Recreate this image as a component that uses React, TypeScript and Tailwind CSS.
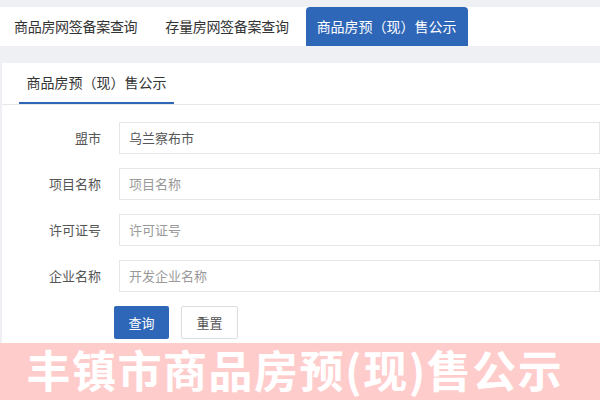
import React from "react";

const tabs = ["商品房网签备案查询", "存量房网签备案查询", "商品房预（现）售公示"];

const fields = [
  { label: "盟市", value: "乌兰察布市", placeholder: "" },
  { label: "项目名称", value: "", placeholder: "项目名称" },
  { label: "许可证号", value: "", placeholder: "许可证号" },
  { label: "企业名称", value: "", placeholder: "开发企业名称" },
];

export default function App() {
  return (
    <div
      className="relative w-[600px] h-[400px] overflow-hidden bg-[#eef0f4]"
      style={{ fontFamily: '"Noto Sans CJK SC", "Noto Sans", sans-serif' }}
    >
      <div className="pt-[7px]">
        <div className="flex h-[39px] bg-white">
          {tabs.map((t, i) =>
            i === 2 ? (
              <div
                key={t}
                className="ml-[17px] flex w-[162px] items-center justify-center rounded-t-[4px] bg-[#2f67b8] text-[14px] text-white"
              >
                {t}
              </div>
            ) : (
              <div
                key={t}
                className={`flex items-center text-[14px] tracking-[-0.3px] text-[#333] ${i === 0 ? "pl-[14px]" : "pl-[28px]"}`}
              >
                {t}
              </div>
            )
          )}
        </div>
      </div>

      <div className="mt-[17px] ml-[2px] h-[400px] bg-white">
        <div className="flex h-[42px] border-b border-[#e8e8e8] pl-[17px]">
          <div className="flex w-[155px] items-center justify-center border-b-2 border-[#2f67b8] text-[14px] text-[#333]">
            商品房预（现）售公示
          </div>
        </div>

        <div className="flex flex-col gap-[14px] pt-[17px]">
          {fields.map((f) => (
            <div key={f.label} className="flex items-center">
              <div className="w-[99px] text-right text-[13px] text-[#555]">{f.label}</div>
              <div className="ml-[18px] flex h-[32px] flex-1 items-center border border-[#e6e6e6] pl-[9px] text-[13px]">
                {f.value ? (
                  <span className="text-[#555]">{f.value}</span>
                ) : (
                  <span className="text-[#999]">{f.placeholder}</span>
                )}
              </div>
            </div>
          ))}
          <div className="flex gap-[12px] pl-[112px]">
            <div className="flex h-[33px] w-[55px] items-center justify-center rounded-[2px] bg-[#2f67b8] text-[13px] text-white">
              查询
            </div>
            <div className="flex h-[33px] w-[57px] items-center justify-center rounded-[2px] border border-[#ddd] bg-white text-[13px] text-[#555]">
              重置
            </div>
          </div>
        </div>
      </div>

      <div className="absolute bottom-0 left-0 flex h-[57px] w-full items-center justify-center bg-[#ffcccc] pb-[6px] pr-[10px]">
        <span className="text-[44px] font-bold leading-[48px] tracking-[1.5px] text-white">丰镇市商品房预(现)售公示</span>
      </div>
    </div>
  );
}
